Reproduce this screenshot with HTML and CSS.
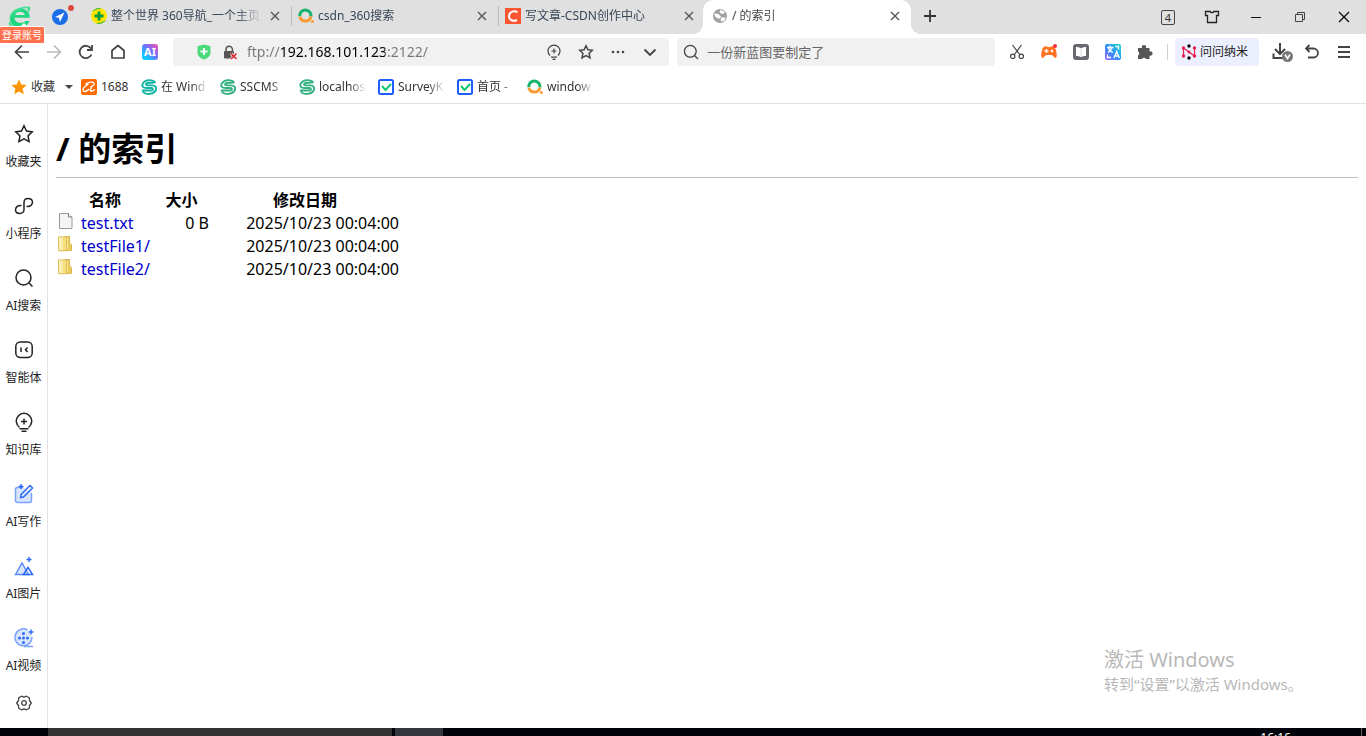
FILE: index.html
```html
<!DOCTYPE html>
<html lang="zh-CN">

<head>
  <meta charset="UTF-8">
  <meta name="viewport" content="width=device-width, initial-scale=1.0">
  <title>/ 的索引</title>
  <link rel="stylesheet" href="styles.css">
</head>

<body>
  <!-- shared icons -->
  <svg class="sprite" aria-hidden="true">
    <symbol id="close" viewBox="0 0 16 16">
      <path d="M4 4l8 8M12 4l-8 8" fill="none" stroke="currentColor" stroke-width="1.4" />
    </symbol>
    <symbol id="so" viewBox="0 0 16 16">
      <path d="M1.8 8.2A5.6 5.6 0 1 1 12.9 8.4" fill="none" stroke="#15b36b" stroke-width="3" />
      <path d="M1.9 8.6A5.6 5.6 0 0 0 12.9 8.4" fill="none" stroke="#f99b35" stroke-width="3" />
      <circle cx="14.4" cy="13.6" r="1.5" fill="#f99b35" />
    </symbol>
    <symbol id="sscms" viewBox="0 0 16 16">
      <path d="M14.500 3.300C11.500 0 4.500.5 2 4.200 0 7.500 2.500 9 5.500 9h4.500c2.500 0 2.500 2.500 0 2.500H.8M1.800 12.800c3.500 3.500 10.500 2.500 12.700-1C16.500 8 13.500 6.500 11 6.400H6.500C4.500 6.200 4.500 4.600 6.500 4c2.500-.6 5-.5 8-.5" fill="none" stroke="currentColor" stroke-width="1.900" />
    </symbol>
    <symbol id="check" viewBox="0 0 16 16">
      <rect x="1" y="1" width="14" height="14" rx="1.500" fill="#fff" stroke="#1e5eff" stroke-width="2" />
      <path d="M4 7l3.500 4 5.500-6" fill="none" stroke="#12c76f" stroke-width="2" />
    </symbol>
    <symbol id="folder" viewBox="0 0 16 16">
      <path d="M7 .5h4.500v6l2 2.500v5.500H7z" fill="#eccb5a" stroke="#cfa93f" stroke-width=".8" />
      <path d="M.5 .8h8v14h-8z" fill="#f5df80" stroke="#d9b84c" stroke-width=".8" />
      <path d="M1 1.500h3.500v12.500H1z" fill="#fbf0b4" />
      <path d="M9.500 2v11" stroke="#fae99c" />
    </symbol>
  </svg>

  <div class="browser">
    <header class="titlebar">
      <div class="account">
        <button class="logo" aria-label="360">
          <svg width="24" height="24" viewBox="0 0 24 24">
            <path d="M21.800 12.700H6.500c.4 5.300 7.500 6.800 11 3.200h4C19.500 20.800 15.500 23 11.500 23 5.500 23 1.800 18.500 2 13.300 2.200 7.500 6.500 3.500 12 3.500c6 0 10 3.700 9.800 9.200zM7 10h10c-1-4.200-8.500-4.500-10 0z" fill="#1fd681" />
            <path d="M1.500 14C1 6 12 .5 21.500 1.500c2 1 .5 5-2.500 7 2.500-5 0-5.500-3-5C10 4.500 5 8.500 1.500 14zM1.500 16c-1.500 3-1 5 3 5.500" fill="#45df94" />
          </svg>
        </button>
        <button class="compass" aria-label="导航">
          <svg width="16" height="16" viewBox="0 0 16 16">
            <circle cx="8" cy="8" r="8" fill="#1c6ee8" />
            <path d="M12.500 3.500L3 8l4 1 1 4z" fill="#fff" />
          </svg>
          <span class="dot"></span>
        </button>
        <span class="login-tip">登录账号</span>
      </div>

      <nav class="tabs">
        <div class="tab">
          <svg class="icon" viewBox="0 0 16 16">
            <circle cx="8" cy="8" r="8" fill="#ffe600" />
            <path d="M1 4a8 8 0 0 1 10-3.400C6 1 3.500 3 1 4zM15 12a8 8 0 0 1-10 3.400c5-.4 7.500-2.400 10-3.400z" fill="#42b649" />
            <path d="M8 3.500v9M3.500 8h9" stroke="#079c3d" stroke-width="2.800" />
          </svg>
          <button class="tab-title">整个世界 360导航_一个主页</button>
          <button class="tab-close" aria-label="关闭"><svg class="icon"><use href="#close" /></svg></button>
        </div>
        <div class="tab">
          <svg class="icon"><use href="#so" /></svg>
          <button class="tab-title">csdn_360搜索</button>
          <button class="tab-close" aria-label="关闭"><svg class="icon"><use href="#close" /></svg></button>
        </div>
        <div class="tab">
          <svg class="icon" viewBox="0 0 16 16">
            <path d="M0 0h16v16H0z" fill="#fc5531" />
            <path d="M12.500 4.200C8.500 2.200 4.300 3.800 4 8.200c-.2 4 4 5.600 8 3.800" fill="none" stroke="#fff" stroke-width="2" />
          </svg>
          <button class="tab-title">写文章-CSDN创作中心</button>
          <button class="tab-close" aria-label="关闭"><svg class="icon"><use href="#close" /></svg></button>
        </div>
        <div class="tab active">
          <svg class="icon" viewBox="0 0 16 16">
            <circle cx="8" cy="8" r="7" fill="#a0a0a0" />
            <path d="M2.200 5.500l4.300.5 2.500 2.500-1 2H6l-3-2zM8.500 1.800l4.500 2L11.500 6 9 5.500 7.500 4zM10 9l4 1-2 3-2.500.5L8.500 12z" fill="#fff" />
          </svg>
          <button class="tab-title">/ 的索引</button>
          <button class="tab-close" aria-label="关闭"><svg class="icon"><use href="#close" /></svg></button>
        </div>
        <button class="new-tab" aria-label="新标签页">
          <svg class="icon" viewBox="0 0 16 16"><path d="M8 2v12M2 8h12" stroke="#333" stroke-width="1.800" /></svg>
        </button>
      </nav>

      <div class="window-controls">
        <button><span class="tab-count">4</span></button>
        <button aria-label="皮肤">
          <svg class="icon" viewBox="0 0 16 16"><path d="M5 2.500h1.200C6.500 4 9.500 4 9.800 2.500H14.500v4h-2v7h-9v-7h-2v-4z" fill="none" stroke="#222" stroke-width="1.300" /></svg>
        </button>
        <button aria-label="最小化">
          <svg class="icon" viewBox="0 0 16 16"><path d="M3 8.500h10" stroke="#111" /></svg>
        </button>
        <button aria-label="还原">
          <svg class="icon" viewBox="0 0 16 16"><path d="M3.500 5.500h7v7h-7zM5.500 5.500v-2h7v7h-2" fill="none" stroke="#444" /></svg>
        </button>
        <button aria-label="关闭窗口">
          <svg class="icon" viewBox="0 0 16 16"><path d="M3 3l10 10M13 3L3 13" stroke="#111" stroke-width="1.400" /></svg>
        </button>
      </div>
    </header>

    <div class="toolbar">
      <button class="tool" aria-label="后退">
        <svg class="icon" viewBox="0 0 16 16"><path d="M15 8H2M8 1.500L1.500 8 8 14.500" fill="none" stroke="#444" stroke-width="1.700" /></svg>
      </button>
      <button class="tool" aria-label="前进">
        <svg class="icon" viewBox="0 0 16 16"><path d="M1 8h13M8 1.500L14.500 8 8 14.500" fill="none" stroke="#bbb" stroke-width="1.700" /></svg>
      </button>
      <button class="tool" aria-label="刷新">
        <svg class="icon" viewBox="0 0 16 16"><path d="M13.500 10.500A6.200 6.200 0 1 1 13 4.500M14 1v5H9" fill="none" stroke="#444" stroke-width="1.800" /></svg>
      </button>
      <button class="tool" aria-label="主页">
        <svg class="icon" viewBox="0 0 16 16"><path d="M2 6.500L8 1.500l6 5v7.500H2z" fill="none" stroke="#444" stroke-width="1.700" stroke-linejoin="round" /></svg>
      </button>
      <button class="tool"><span class="ai-badge">AI</span></button>

      <div class="address">
        <svg class="icon" viewBox="0 0 16 16">
          <path d="M8 .5l6.500 1.700v6c0 4-3 6-6.500 7.300C4.500 14.200 1.500 12.200 1.500 8.200v-6z" fill="#48d97b" />
          <path d="M8 4v7M4.500 7.500h7" stroke="#fff" stroke-width="1.800" />
        </svg>
        <svg class="icon lock" viewBox="0 0 16 16">
          <path d="M4 8V5.500a3.200 3.200 0 0 1 6.400 0V8" fill="none" stroke="#555" stroke-width="1.500" />
          <rect x="2" y="7" width="10" height="7.500" rx="1" fill="#555" />
          <path d="M9 9.500l5.500 5.500M14.500 9.500L9 15" stroke="#fff" stroke-width="3" />
          <path d="M9 9.500l5.500 5.500M14.500 9.500L9 15" stroke="#d8232a" stroke-width="1.700" />
        </svg>
        <input class="url" type="text" aria-label="地址" value="ftp://192.168.101.123:2122/">
        <button class="tool" aria-label="知识">
          <svg class="icon" viewBox="0 0 16 16"><path d="M4 11.500a6 6 0 1 1 8 0M5 13.200h6M6.500 15.300h3M8 4.500v5M5.500 7h5" fill="none" stroke="#444" stroke-width="1.200" /></svg>
        </button>
        <button class="tool" aria-label="收藏">
          <svg class="icon" viewBox="0 0 16 16"><path d="M8 1.800l1.900 4 4.500.5-3.300 3 .9 4.500L8 11.600l-4 2.200.9-4.500-3.300-3 4.500-.5z" fill="none" stroke="#444" stroke-width="1.500" /></svg>
        </button>
        <button class="tool" aria-label="更多">
          <svg class="icon" viewBox="0 0 16 16" fill="#444"><circle cx="3" cy="8" r="1.300" /><circle cx="8" cy="8" r="1.300" /><circle cx="13" cy="8" r="1.300" /></svg>
        </button>
        <button class="tool" aria-label="展开">
          <svg class="icon" viewBox="0 0 16 16"><path d="M2.500 5.500L8 11l5.500-5.500" fill="none" stroke="#444" stroke-width="1.800" /></svg>
        </button>
      </div>

      <div class="search">
        <svg class="icon" viewBox="0 0 16 16"><circle cx="7.300" cy="7.300" r="5.900" fill="none" stroke="#444" stroke-width="1.300" /><path d="M11.500 11.500l3.500 3.500" stroke="#444" stroke-width="1.300" /></svg>
        <input type="text" aria-label="搜索" placeholder="一份新蓝图要制定了">
      </div>

      <div class="extensions">
        <button class="tool" aria-label="截图">
          <svg class="icon" viewBox="0 0 16 16" fill="none" stroke="#444" stroke-width="1.200"><path d="M3.500 1l7.500 10M12.500 1L5 11" /><circle cx="3.700" cy="12.300" r="2.200" /><circle cx="12.300" cy="12.300" r="2.200" /></svg>
        </button>
        <button class="tool" aria-label="游戏">
          <svg class="icon" viewBox="0 0 16 16">
            <path d="M3.500 2.500C6 1.500 6 3 8 3s2-1.500 4.500-.5C15.500 4 17 14 14.500 14c-1.500 0-2.500-3-4-3h-5c-1.500 0-2.500 3-4 3C-1 14 .5 4 3.500 2.500z" fill="#ff7425" />
            <path d="M5.500 5v4M3.500 7h4" stroke="#fff" stroke-width="1.300" />
            <circle cx="11" cy="7" r="1.200" fill="#fff" />
            <circle cx="14" cy="2" r="2" fill="#f5313d" />
          </svg>
        </button>
        <button class="tool" aria-label="阅读">
          <svg class="icon" viewBox="0 0 16 16">
            <rect width="16" height="16" rx="3" fill="#696a70" />
            <path d="M3 3c2 0 4 .5 5 1.500C9 3.500 11 3 13 3v9c-2 0-4 .3-5 1.200C7 12.300 5 12 3 12z" fill="#fff" />
            <path d="M8 5v8" stroke="#e2e2e4" />
          </svg>
        </button>
        <button class="tool" aria-label="翻译">
          <svg class="icon" viewBox="0 0 16 16">
            <defs><linearGradient id="tr" x1="1" y1="0" x2="0" y2="1"><stop stop-color="#20dfc8" /><stop offset=".5" stop-color="#2b91fa" /><stop offset="1" stop-color="#9666f5" /></linearGradient></defs>
            <rect width="16" height="16" rx="2" fill="url(#tr)" />
            <path d="M2 3.500h6.500M5 1.500v2M3 8.500c2-1 3.500-3 4-5M3.500 4c.5 2 2 3.500 4.500 4.500M9 14l2.700-6.500 2.700 6.500M10 12h3.500M10.500 2.500h3v3M2.500 10.500v3H6" fill="none" stroke="#fff" stroke-width="1.300" />
          </svg>
        </button>
        <button class="tool" aria-label="扩展">
          <svg class="icon" viewBox="0 0 16 16"><path d="M1 4h4a2.200 2.200 0 1 1 4 0h3.500v3.500a2.200 2.200 0 1 1 0 4V15H9a2.200 2.200 0 0 0-4 0H1v-3.500a2.200 2.200 0 0 0 0-4z" fill="#555" /></svg>
        </button>
      </div>

      <button class="nami">
        <svg class="icon" viewBox="0 0 16 16">
          <path d="M2.500 13V3.500M2.500 4l11 8M13.500 12V3.500" fill="none" stroke="#e41e4d" stroke-width="1.200" />
          <g fill="#e41e4d"><circle cx="2.500" cy="4" r="1.700" /><circle cx="2.500" cy="12" r="1.700" /><circle cx="13.500" cy="4" r="1.700" /><circle cx="13.500" cy="12" r="1.700" /><circle cx="8" cy="8" r="1.500" /></g>
          <circle cx="8" cy="2" r="1.700" /><circle cx="8" cy="14" r="1.700" />
        </svg>
        问问纳米
      </button>

      <button class="tool" aria-label="下载">
        <svg width="22" height="22" viewBox="0 0 22 22">
          <path d="M9 2v11M4 8l5 5 5-5M2.500 12.500V17H12" fill="none" stroke="#444" stroke-width="2" />
          <circle cx="16.500" cy="15.500" r="5.500" fill="#777" />
          <path d="M14 13.500l2.500 4 2.500-4" fill="none" stroke="#fff" stroke-width="1.500" />
        </svg>
      </button>
      <button class="tool undo" aria-label="恢复">
        <svg class="icon" viewBox="0 0 16 16"><path d="M5.500 1L2 4.500 5.500 8M2 4.500h7.500a4.500 4.500 0 0 1 0 9H4" fill="none" stroke="#444" stroke-width="1.800" /></svg>
      </button>
      <button class="tool menu" aria-label="菜单">
        <svg class="icon" viewBox="0 0 16 16"><path d="M2 3h12M2 8h12M2 13h12" stroke="#444" stroke-width="1.800" /></svg>
      </button>
    </div>

    <nav class="bookmarks">
      <button class="bookmark favorites">
        <svg class="icon" viewBox="0 0 16 16"><path d="M8 .5l2.300 5 5.300.6-4 3.700 1.200 5.500L8 12.500l-4.800 2.800 1.200-5.500-4-3.700 5.300-.6z" fill="#ff9500" /></svg>
        收藏
        <span class="caret"></span>
      </button>
      <a class="bookmark short" href="#">
        <svg class="icon" viewBox="0 0 16 16">
          <rect width="16" height="16" rx="2" fill="#ff6a00" />
          <path d="M4.500 5.500C6 3.500 10 2.500 12.500 3.500c1.800 1.300 0 3.500-3 4.500M7.500 5C5 6.500 1.500 9.500 2 11.500c1 2 4.500.5 6-1.500M9.500 8c1.500.3.500 1.500 0 2.500-.8 2.500 2 2 4.500 0" fill="none" stroke="#fff" stroke-width="1.400" />
        </svg>
        <span>1688</span>
      </a>
      <a class="bookmark teal" href="#"><svg class="icon"><use href="#sscms" /></svg><span>在 Wind</span></a>
      <a class="bookmark green" href="#"><svg class="icon"><use href="#sscms" /></svg><span>SSCMS</span></a>
      <a class="bookmark green" href="#"><svg class="icon"><use href="#sscms" /></svg><span>localhos</span></a>
      <a class="bookmark" href="#"><svg class="icon"><use href="#check" /></svg><span>SurveyK</span></a>
      <a class="bookmark medium" href="#"><svg class="icon"><use href="#check" /></svg><span>首页 -</span></a>
      <a class="bookmark" href="#"><svg class="icon"><use href="#so" /></svg><span>window</span></a>
    </nav>

    <div class="workspace">
      <aside class="sidebar">
        <button class="side-item">
          <svg viewBox="0 0 20 20"><path d="M10 1.800l2.500 5.300 5.700.8-4.200 4 1.100 5.800L10 14.900l-5.100 2.800L6 11.900l-4.200-4 5.700-.8z" /></svg>
          收藏夹
        </button>
        <button class="side-item">
          <svg viewBox="0 0 20 20"><path d="M7.500 9.500C3.500 9 1.500 11.500 1.500 14c.2 4.500 8.500 5 8.500-.5V6.500C10 1 18 1.500 18.500 6c0 2.500-2 5-6 4.500" /></svg>
          小程序
        </button>
        <button class="side-item">
          <svg viewBox="0 0 20 20"><circle cx="9.500" cy="9.500" r="7.500" /><path d="M15 15l3.500 3.500" /></svg>
          AI搜索
        </button>
        <button class="side-item">
          <svg viewBox="0 0 20 20"><rect x="1.800" y="2" width="16.400" height="15.500" rx="4.500" /><path d="M7 7.500v4.500M13.500 7.500l-2 2.200 2 2.300" /></svg>
          智能体
        </button>
        <button class="side-item">
          <svg viewBox="0 0 20 20"><path d="M5.500 15.300a7.700 7.700 0 1 1 9 0M5.500 16.800h9M7.500 19.300h5M10 6.500v6M7 9.500h6" /></svg>
          知识库
        </button>
        <button class="side-item blue">
          <svg viewBox="0 0 20 20"><path d="M9 3.500H3.500c-2 0-2 1-2 2v11c0 2 1 2 2 2h12c2 0 2-1 2-2V9" fill="#d9e5ff" stroke="#7da2fa" /><path d="M7 10.500L16 1.500l2.500 2.500-9 9-3 .5zM7 0v5M4.500 2.500h5" /></svg>
          AI写作
        </button>
        <button class="side-item blue">
          <svg viewBox="0 0 20 20"><path d="M1.500 18.500L8 7 14.500 18.500z" fill="#d9e5ff" stroke="#5c8cf9" /><path d="M9.500 18.500l4.500-7 4.500 7zM15 1v5M12.500 3.500h5" /></svg>
          AI图片
        </button>
        <button class="side-item blue">
          <svg viewBox="0 0 20 20"><path d="M13.500 1.800A8.500 8.500 0 1 0 18 9M10 18.500h9" fill="#d9e5ff" stroke="#7da2fa" /><g fill="#2d6bf6" stroke="none"><circle cx="9.500" cy="5.500" r="1.500" /><circle cx="5.500" cy="10" r="1.500" /><circle cx="9.500" cy="10" r="1.500" /><circle cx="13.500" cy="10" r="1.500" /><circle cx="9.500" cy="14.500" r="1.500" /></g><path d="M17 1.500v5M14.500 4h5" /></svg>
          AI视频
        </button>
        <button class="settings" aria-label="设置">
          <svg class="icon" viewBox="0 0 16 16" fill="none" stroke="#444" stroke-width="1.300" stroke-linejoin="round"><path d="M5.500 1.200l2.500 1 2.500-1 2.800 1.600.2 2.700L15.300 8l-1.800 2.500-.2 2.700-2.800 1.600-2.500-1-2.500 1-2.800-1.600-.2-2.700L.7 8l1.800-2.500.2-2.700z" /><circle cx="8" cy="8" r="2.300" /></svg>
        </button>
      </aside>

      <main class="listing">
        <h1>/ 的索引</h1>
        <table>
          <thead>
            <tr>
              <th class="name">名称</th>
              <th class="size">大小</th>
              <th class="date">修改日期</th>
            </tr>
          </thead>
          <tbody>
            <tr>
              <td>
                <a href="#"><svg class="icon" viewBox="0 0 16 16"><path d="M1.500.5h9l3.500 3.500v11.500H1.500z" fill="#f4f4f4" stroke="#999" /><path d="M10.500.5V4H14" fill="#fff" stroke="#777" /></svg>test.txt</a>
              </td>
              <td>0 B</td>
              <td>2025/10/23 00:04:00</td>
            </tr>
            <tr>
              <td><a href="#"><svg class="icon"><use href="#folder" /></svg>testFile1/</a></td>
              <td></td>
              <td>2025/10/23 00:04:00</td>
            </tr>
            <tr>
              <td><a href="#"><svg class="icon"><use href="#folder" /></svg>testFile2/</a></td>
              <td></td>
              <td>2025/10/23 00:04:00</td>
            </tr>
          </tbody>
        </table>

        <div class="activation">
          <p class="activation-title">激活 Windows</p>
          <p>转到“设置”以激活 Windows。</p>
        </div>
      </main>
    </div>
  </div>

  <footer class="taskbar">
    <div class="task-search"></div>
    <div class="task-view"></div>
    <time>16:16</time>
    <div class="show-desktop"></div>
  </footer>
</body>

</html>
```
FILE: styles.css
```css
* {
  box-sizing: border-box;
}

body {
  display: flex;
  flex-direction: column;
  height: 100vh;
  margin: 0;
  overflow: hidden;
  font-family: "Noto Sans", "Noto Sans CJK SC", sans-serif;
  font-size: 12px;
  line-height: 18px;
  color: #333;
  background: white;
}

button,
input {
  padding: 0;
  border: none;
  background: none;
  font: inherit;
  color: inherit;
}

input {
  min-width: 0;
  flex: 1;
  outline: none;
}

svg {
  display: block;
  flex: none;
}

.sprite {
  position: absolute;
  width: 0;
  height: 0;
}

.icon {
  width: 16px;
  height: 16px;
}

.browser {
  display: flex;
  flex: 1;
  flex-direction: column;
  min-height: 0;
}

/* title bar */
.titlebar {
  display: flex;
  height: 34px;
  background: #e0e0e0;
}

.account {
  position: relative;
  display: flex;
  align-items: center;
  gap: 20px;
  width: 84px;
  padding-left: 8px;
}

.compass {
  position: relative;
}

.dot {
  position: absolute;
  top: -4px;
  right: -6px;
  width: 6px;
  height: 6px;
  border-radius: 50%;
  background: #dc4a3e;
}

.login-tip {
  position: absolute;
  z-index: 1;
  top: 26px;
  left: -1px;
  padding: 0 2px;
  border: 1px solid #fff;
  border-radius: 2px;
  font-size: 10px;
  line-height: 16px;
  white-space: nowrap;
  color: #fff;
  background: #ff704d;
}

.login-tip::before {
  content: "";
  position: absolute;
  top: -4px;
  left: 20px;
  border: 4px solid transparent;
  border-top: none;
  border-bottom-color: #fff;
}

.tabs {
  display: flex;
  flex: 1;
  min-width: 0;
}

.tab {
  position: relative;
  display: flex;
  align-items: center;
  gap: 4px;
  width: 207px;
  padding: 0 8px 3px 7px;
  color: #384658;
}

.tab:not(.active)::after {
  content: "";
  position: absolute;
  top: 6px;
  right: -1px;
  width: 1px;
  height: 20px;
  background: #bdbdbd;
}

.tab:nth-child(3)::after {
  display: none;
}

.tab.active {
  width: 208px;
  margin-left: -2px;
  padding-left: 9px;
  border-radius: 10px 10px 0 0;
  color: #444;
  background: white;
}

.tab.active::before,
.tab.active::after {
  content: "";
  position: absolute;
  bottom: 0;
  width: 10px;
  height: 10px;
}

.tab.active::before {
  right: 100%;
  background: radial-gradient(circle at 0 0, transparent 10px, white 10px);
}

.tab.active::after {
  left: 100%;
  background: radial-gradient(circle at 100% 0, transparent 10px, white 10px);
}

.tab-title {
  flex: 1;
  overflow: hidden;
  white-space: nowrap;
  text-align: left;
  -webkit-mask-image: linear-gradient(to right, #000 125px, transparent 152px);
}

.tab-close {
  color: #555;
}

.new-tab {
  padding: 0 11px 2px;
}

.window-controls {
  display: flex;
}

.window-controls button {
  display: flex;
  align-items: center;
  justify-content: center;
  width: 44px;
}

.tab-count {
  width: 14px;
  height: 15px;
  border: 1px solid #444;
  border-radius: 2px;
  font-size: 11px;
  line-height: 13px;
}

/* toolbar */
.toolbar {
  display: flex;
  align-items: center;
  height: 36px;
  padding: 0 4px 0 6px;
}

.tool {
  display: flex;
  align-items: center;
  justify-content: center;
  width: 32px;
  height: 28px;
}

.ai-badge {
  width: 16px;
  height: 16px;
  border-radius: 3px;
  font-size: 11px;
  font-weight: bold;
  line-height: 16px;
  color: #fff;
  background: linear-gradient(45deg, #12c9ff 20%, #6d72ff 55%, #ff4fa8);
}

.address,
.search {
  display: flex;
  align-items: center;
  height: 28px;
  border-radius: 4px;
  background: #f1f1f1;
}

.address {
  flex: 20;
  gap: 10px;
  margin-left: 7px;
  padding: 0 3px 0 23px;
}

.address .tool {
  margin-left: -10px;
}

.lock {
  margin-right: -1px;
}

/* the host part of the url is darker than the rest */
.url {
  height: 20px;
  font-size: 14px;
  line-height: 20px;
  color: transparent;
  background: linear-gradient(to right, #777 34px, #000 34px 138px, #777 138px);
  -webkit-background-clip: text;
  background-clip: text;
}

.search {
  flex: 13;
  gap: 8px;
  margin-left: 8px;
  padding: 0 6px;
  font-size: 13px;
}

.search input::placeholder {
  color: #666;
}

.extensions {
  position: relative;
  display: flex;
  margin: 0 7px 0 6px;
  padding-right: 7px;
}

.extensions::after {
  content: "";
  position: absolute;
  top: 6px;
  right: 0;
  width: 1px;
  height: 16px;
  background: #d0d0d0;
}

.nami {
  display: flex;
  align-items: center;
  gap: 3px;
  width: 84px;
  height: 28px;
  margin-right: 7px;
  padding-left: 6px;
  border-radius: 4px;
  color: #222;
  background: #eceffe;
}

.undo {
  width: 28px;
}

.menu {
  width: 36px;
}

/* bookmarks */
.bookmarks {
  display: flex;
  align-items: center;
  gap: 12px;
  height: 34px;
  padding-left: 11px;
  border-bottom: 1px solid #e2e2e2;
}

.bookmark {
  display: flex;
  align-items: center;
  gap: 4px;
  color: #333;
  text-decoration: none;
}

.bookmark span:not(.caret) {
  width: 47px;
  white-space: nowrap;
  -webkit-mask-image: linear-gradient(to right, #000 30px, transparent);
}

.bookmark.short span:not(.caret) {
  width: 28px;
  -webkit-mask-image: none;
}

.bookmark.medium span:not(.caret) {
  width: 38px;
  -webkit-mask-image: linear-gradient(to right, #000 24px, transparent);
}

.favorites {
  width: 62px;
  margin-right: -4px;
}

.caret {
  margin-left: auto;
  border: 4px solid transparent;
  border-top-color: #444;
  border-bottom: none;
}

.teal {
  --mark: #10b3a3;
}

.green {
  --mark: #35b083;
}

.bookmark .icon {
  color: var(--mark);
}

/* side bar */
.workspace {
  display: flex;
  flex: 1;
  min-height: 0;
}

.sidebar {
  width: 48px;
  border-right: 1px solid #e2e2e2;
}

.side-item {
  display: flex;
  flex-direction: column;
  align-items: center;
  gap: 9px;
  width: 100%;
  height: 72px;
  padding-top: 20px;
  white-space: nowrap;
  color: #222;
}

.side-item svg {
  width: 20px;
  height: 20px;
  fill: none;
  stroke: #222;
  stroke-width: 1.5;
}

.side-item.blue svg {
  stroke: #2d6bf6;
}

.settings {
  display: flex;
  align-items: center;
  justify-content: center;
  width: 100%;
  height: 46px;
}

/* directory listing */
.listing {
  position: relative;
  flex: 1;
  padding: 0 8px;
  font-size: 16px;
  line-height: 21px;
  color: #000;
}

h1 {
  margin: 24px 0 10px;
  padding-bottom: 7px;
  border-bottom: 1px solid #c0c0c0;
  font-size: 33px;
  line-height: 42px;
  white-space: nowrap;
}

table {
  border-spacing: 2px;
}

th,
td {
  height: 21px;
  padding: 0;
  white-space: nowrap;
}

td {
  text-align: right;
}

td:first-child {
  text-align: left;
}

.name {
  width: 94px;
}

.size {
  width: 55px;
}

.date {
  width: 188px;
}

td a {
  display: flex;
  gap: 7px;
  color: #0000cc;
  text-decoration: none;
}

.activation {
  position: absolute;
  right: 60px;
  bottom: 33px;
  width: 202px;
  white-space: nowrap;
  color: #b8b8b8;
}

.activation p {
  margin: 0;
  font-size: 15px;
  line-height: 22px;
}

.activation .activation-title {
  font-size: 20px;
  line-height: 26px;
}

/* only the top edge of the system task bar is visible */
.taskbar {
  display: flex;
  height: 8px;
  padding-left: 48px;
  overflow: hidden;
  color: #fff;
  background: #020308;
}

.task-search {
  width: 344px;
  background: #333;
}

.task-view {
  width: 48px;
  margin-left: 3px;
  background: #34373c;
}

.taskbar time {
  margin-left: auto;
  padding-top: 1px;
}

.show-desktop {
  width: 5px;
  margin-left: 70px;
  border-left: 1px solid #666;
}
```
